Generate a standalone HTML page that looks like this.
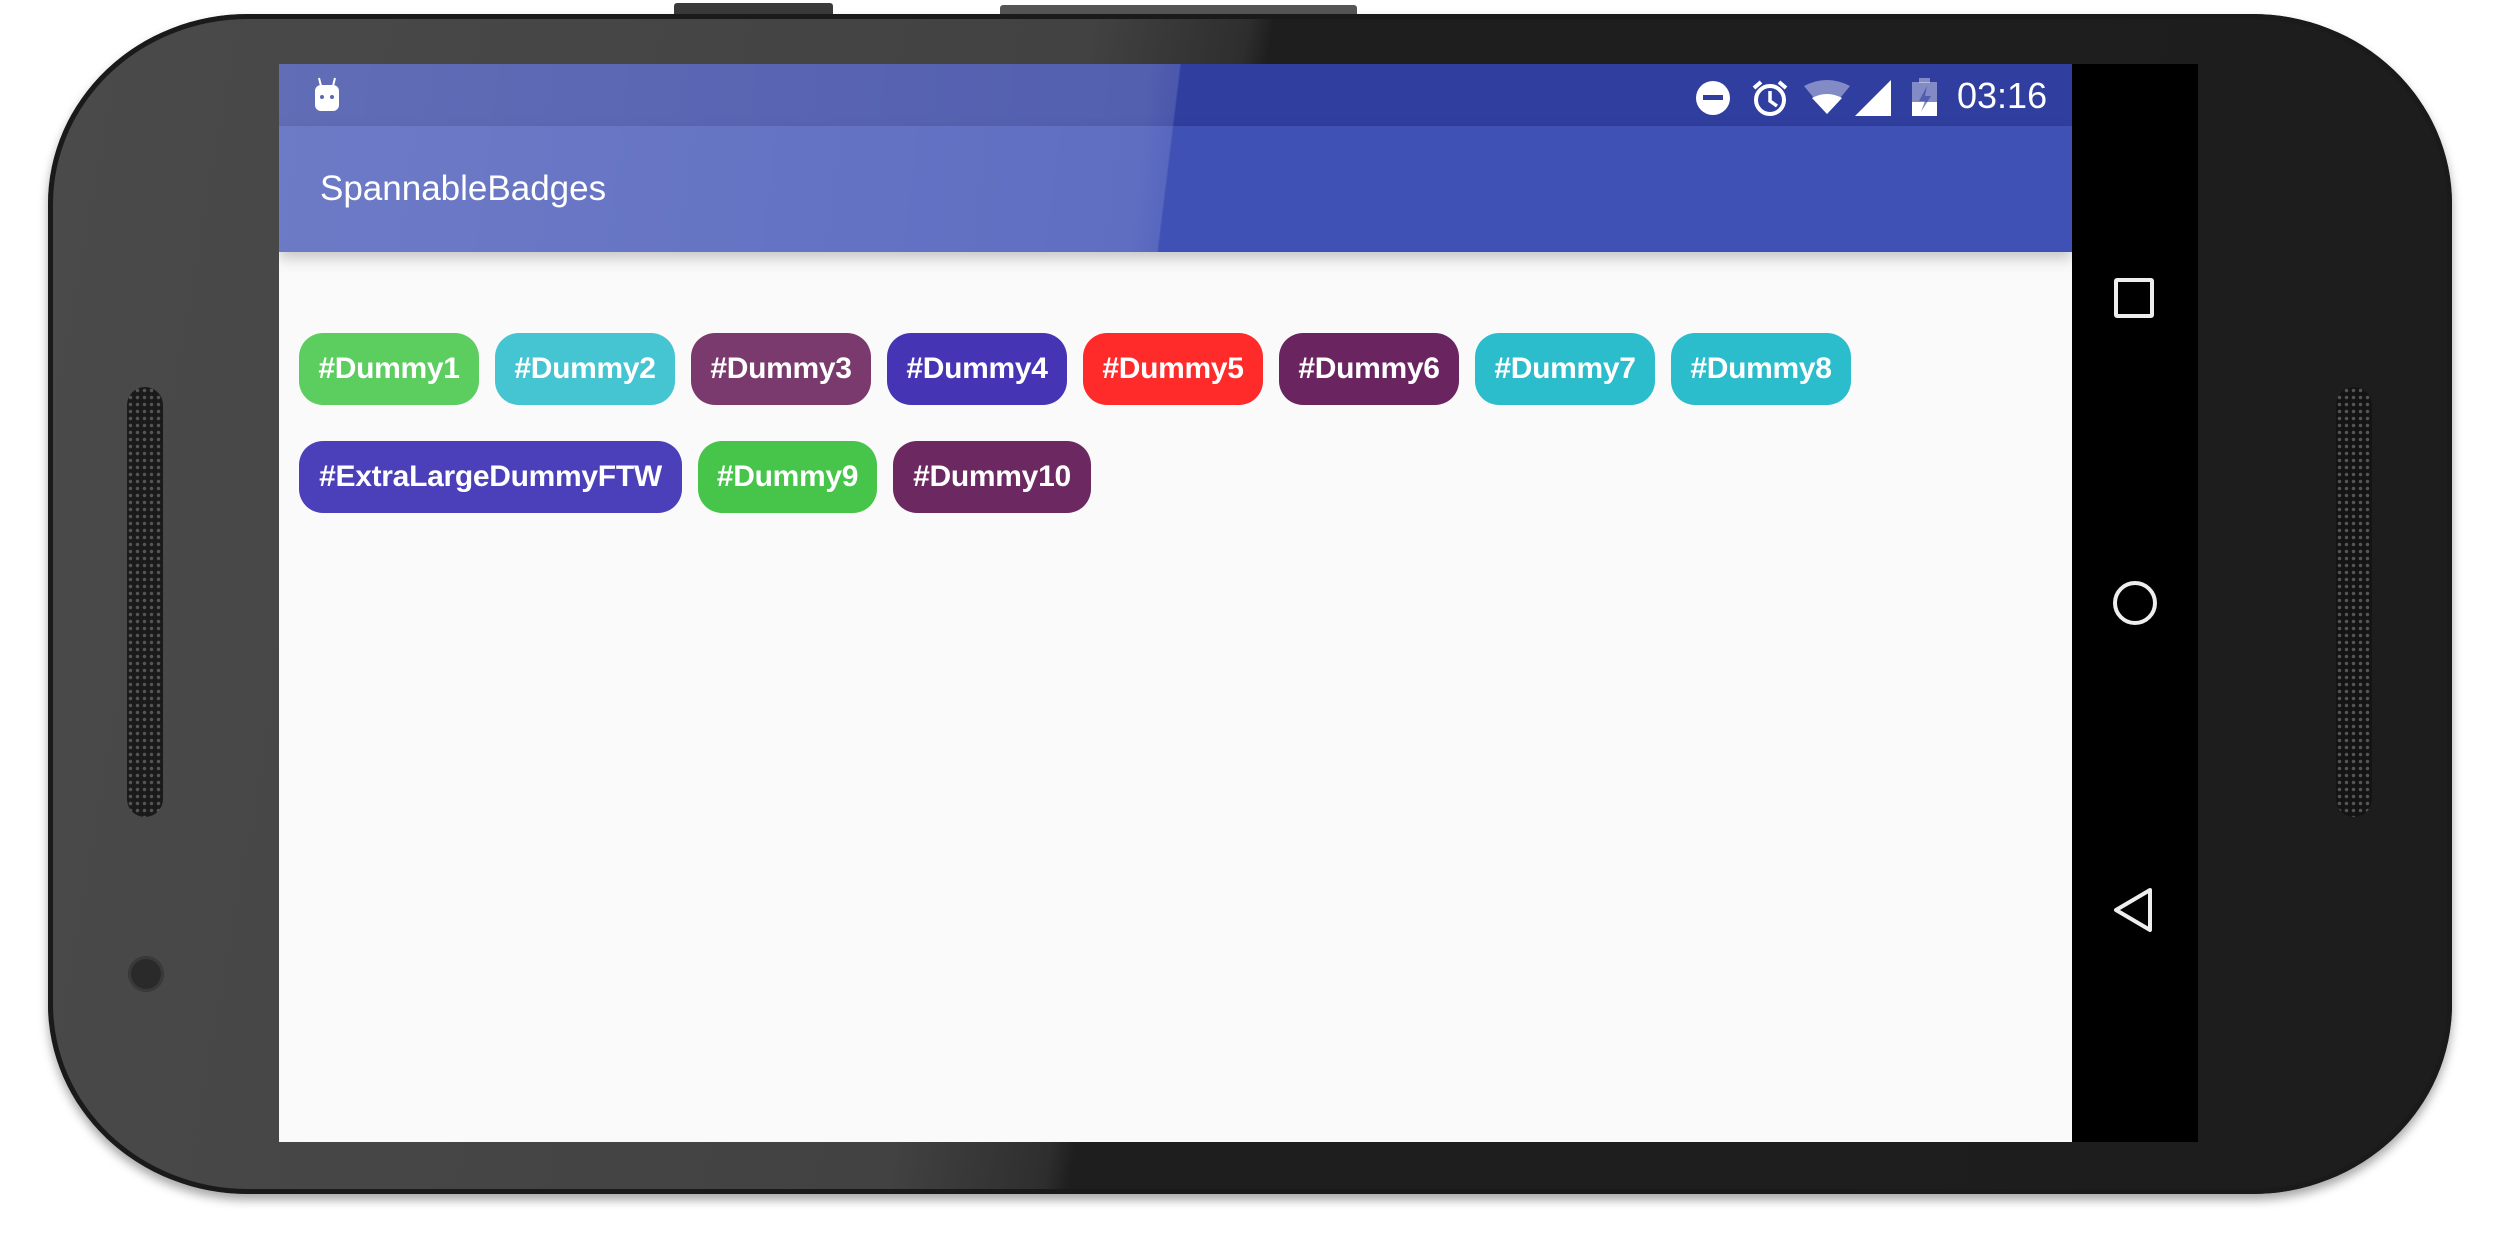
<!DOCTYPE html>
<html><head><meta charset="utf-8"><style>
html,body{margin:0;padding:0;background:#fff;}
body{width:2497px;height:1234px;position:relative;overflow:hidden;font-family:"Liberation Sans",sans-serif;}
.abs{position:absolute;}
.phone{left:48px;top:14px;width:2404px;height:1180px;border-radius:200px/190px;background:linear-gradient(100deg,#4a4a4a 0%,#424242 40%,#2e2e2e 46%,#1e1e1e 47%,#1d1d1d 100%);box-shadow:0 6px 10px rgba(0,0,0,.35), inset 0 0 0 5px #1a1a1a;}
.btn{background:#3a3a3a;border-radius:3px 3px 0 0;}
.screen{left:279px;top:64px;width:1793px;height:1078px;background:#fafafa;overflow:hidden;}
.status{left:0;top:0;width:1793px;height:62px;background:#303f9f;}
.appbar{left:0;top:62px;width:1793px;height:126px;background:#3f51b5;box-shadow:0 6px 14px rgba(0,0,0,.22);}
.glare{left:0;top:0;width:1793px;height:188px;background:linear-gradient(97deg,rgba(255,255,255,.24) 0%,rgba(255,255,255,.17) 48%,rgba(255,255,255,.13) 49.6%,rgba(255,255,255,0) 49.7%);}
.title{left:41px;top:104px;color:#fff;font-size:35px;line-height:42px;}
.nav{left:2072px;top:64px;width:126px;height:1078px;background:#000;}
.b{position:absolute;height:72px;border-radius:24px;color:#fff;font-weight:bold;font-size:30px;line-height:72px;text-align:center;letter-spacing:-0.3px;}
.spk{width:36px;height:430px;border-radius:18px;background:#1a1a1a;background-image:radial-gradient(circle,#555 1.5px,transparent 2px);background-size:7px 7px;}
</style></head><body>
<div class="abs btn" style="left:674px;top:3px;width:159px;height:12px;"></div>
<div class="abs btn" style="left:1000px;top:5px;width:357px;height:10px;background:#555"></div>
<div class="abs phone"></div>
<div class="abs spk" style="left:127px;top:387px;"></div>
<div class="abs spk" style="left:2336px;top:387px;background-color:#141414;"></div>
<div class="abs" style="left:128px;top:956px;width:36px;height:36px;border-radius:50%;background:#2a2a2a;box-shadow:inset 0 0 0 3px #3a3a3a;"></div>
<div class="abs nav">
 <div class="abs" style="left:42px;top:214px;border:4px solid #eee;border-radius:3px;box-sizing:border-box;width:40px;height:40px;"></div>
 <div class="abs" style="left:41px;top:517px;width:44px;height:44px;border:4px solid #eee;border-radius:50%;box-sizing:border-box;"></div>
 <svg class="abs" style="left:38px;top:822px" width="48" height="48" viewBox="0 0 48 48"><path d="M40 4 L6 24 L40 44 Z" fill="none" stroke="#eee" stroke-width="4" stroke-linejoin="round"/></svg>
</div>
<div class="abs screen">
 <div class="abs status"></div>
 <div class="abs appbar"></div>
 <div class="abs glare"></div>
 <svg class="abs" style="left:33px;top:12px" width="30" height="38" viewBox="0 0 30 38"><path d="M7 2 L9 10 M23 2 L21 10" stroke="#fff" stroke-width="2"/><rect x="3" y="9" width="24" height="26" rx="6" fill="#fff"/><circle cx="10" cy="21" r="2" fill="#5a67b4"/><circle cx="20" cy="21" r="2" fill="#5a67b4"/></svg>
 <div class="abs title">SpannableBadges</div>
 <svg class="abs" style="left:1415px;top:14px" width="380" height="40" viewBox="0 0 380 40">
  <circle cx="19" cy="20" r="17" fill="#fff"/><rect x="9" y="17" width="20" height="5" fill="#303f9f"/>
  <circle cx="76" cy="22" r="14" fill="none" stroke="#fff" stroke-width="4"/><path d="M76 13 V23 L83 28" stroke="#fff" stroke-width="3.5" fill="none"/><path d="M60 10 L67 4 M92 10 L85 4" stroke="#fff" stroke-width="4"/>
  <path d="M110 8 Q133 -4 156 8 L133 36 Z" fill="#fff" fill-opacity=".4"/><path d="M118 20 Q133 12 148 20 L133 36 Z" fill="#fff"/>
  <path d="M197 2 L197 38 L161 38 Z" fill="#fff"/>
  <rect x="218" y="4" width="25" height="34" fill="#fff" fill-opacity=".4"/><rect x="225" y="0" width="11" height="5" fill="#fff" fill-opacity=".4"/><rect x="218" y="24" width="25" height="14" fill="#fff"/><path d="M233 8 L225 23 L231 23 L227 34 L237 18 L231 18 Z" fill="#303f9f" fill-opacity=".6"/>
 </svg>
 <div class="abs" style="left:1678px;top:12px;color:#fff;font-size:36px;line-height:40px;">03:16</div>
 <div class="b" style="left:20px;top:269px;width:180px;background:#5ccd5f">#Dummy1</div>
 <div class="b" style="left:216px;top:269px;width:180px;background:#45c4d2">#Dummy2</div>
 <div class="b" style="left:412px;top:269px;width:180px;background:#7a3a6e">#Dummy3</div>
 <div class="b" style="left:608px;top:269px;width:180px;background:#4535b5">#Dummy4</div>
 <div class="b" style="left:804px;top:269px;width:180px;background:#ff2a2a">#Dummy5</div>
 <div class="b" style="left:1000px;top:269px;width:180px;background:#6a2460">#Dummy6</div>
 <div class="b" style="left:1196px;top:269px;width:180px;background:#2bbdcc">#Dummy7</div>
 <div class="b" style="left:1392px;top:269px;width:180px;background:#2bbdcc">#Dummy8</div>
 <div class="b" style="left:20px;top:377px;width:383px;background:#4b3fba">#ExtraLargeDummyFTW</div>
 <div class="b" style="left:419px;top:377px;width:179px;background:#47c54a">#Dummy9</div>
 <div class="b" style="left:614px;top:377px;width:198px;background:#6c2860">#Dummy10</div>
</div>
</body></html>
